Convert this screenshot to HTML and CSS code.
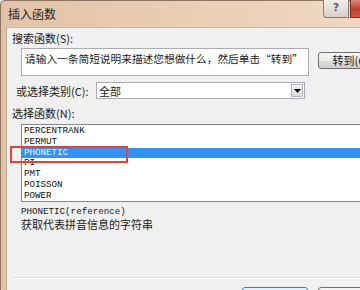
FILE: index.html
```html
<!DOCTYPE html>
<html lang="zh">
<head>
<meta charset="utf-8">
<title>插入函数</title>
<link rel="stylesheet" href="styles.css">
</head>
<body>
<div class="window">
  <div class="titlebar">
    <span class="title">插入函数</span>
    <div class="caption-btns">
      <div class="cap help">?</div>
      <div class="cap close"></div>
    </div>
  </div>
  <div class="frame">
    <div class="content">
      <div class="label">搜索函数(S):</div>
      <div class="search-row">
        <div class="textbox">请输入一条简短说明来描述您想做什么，然后单击“转到”</div>
        <div class="btn go">转到(G)</div>
      </div>
      <div class="cat-row">
        <span class="cat-label">或选择类别(C):</span>
        <div class="select">
          <span class="sel-text">全部</span>
          <span class="sel-arrow"><svg width="7" height="4" viewBox="0 0 7 4"><path d="M0 0H7L3.5 4Z" fill="#000"/></svg></span>
        </div>
      </div>
      <div class="label fn-label">选择函数(N):</div>
      <div class="listbox">
        <div class="item">PERCENTRANK</div>
        <div class="item">PERMUT</div>
        <div class="item selected">PHONETIC</div>
        <div class="item">PI</div>
        <div class="item">PMT</div>
        <div class="item">POISSON</div>
        <div class="item">POWER</div>
        <div class="marker"></div>
      </div>
      <div class="desc-sig">PHONETIC(reference)</div>
      <div class="desc-text">获取代表拼音信息的字符串</div>
      <div class="separator"></div>
      <div class="bottom-row">
        <span class="help-link">有关该函数的帮助</span>
        <div class="btn ok">确定</div>
        <div class="btn cancel">取消</div>
      </div>
    </div>
  </div>
</div>
</body>
</html>
```

FILE: styles.css
```css
html, body {
  margin: 0;
  padding: 0;
}
body {
  width: 360px;
  height: 290px;
  overflow: hidden;
  background: #f0f0f0;
  font-family: "Noto Sans CJK SC", "Noto Sans", sans-serif;
  color: #1a1a1a;
}
.window {
  width: 420px;
  height: 330px;
  display: flex;
  flex-direction: column;
  background: linear-gradient(90deg, #e2c3a7 0%, #ebcfb6 50%, #f2dcc8 100%);
  border-left: 1px solid #8c7460;
  border-top: 1px solid #8c7460;
  border-top-left-radius: 5px;
  box-sizing: border-box;
}
.titlebar {
  height: 26px;
  display: flex;
  align-items: flex-start;
  position: relative;
}
.title {
  font-size: 12px;
  line-height: 12px;
  margin: 7px 0 0 7px;
  color: #1e1e1e;
}
.caption-btns {
  display: flex;
  margin-left: 322px;
  position: absolute;
  left: 0;
  top: -1px;
}
.cap {
  height: 18px;
  box-sizing: border-box;
  border: 1px solid #8a7a6c;
  border-top: none;
}
.help {
  width: 26px;
  border-bottom-left-radius: 4px;
  background: linear-gradient(#f3eeea, #d8d0c8);
  font-family: "DejaVu Sans", sans-serif;
  font-size: 11px;
  line-height: 16px;
  text-align: center;
  color: #55606a;
  font-weight: bold;
}
.close {
  width: 44px;
  margin-left: 1px;
  background: linear-gradient(#e0867a, #c43a2c 55%, #cf5a44);
  border-color: #7a2a22;
}
.frame {
  flex: 1;
  display: flex;
  padding-left: 5px;
}
.content {
  flex: 1;
  background: #f0f0f0;
  border-left: 1px solid #b9aa9c;
  border-top: 1px solid #c9b8a8;
  padding: 3px 0 0 5px;
  display: flex;
  flex-direction: column;
  align-items: flex-start;
}
.label {
  font-size: 11px;
  line-height: 14px;
  height: 14px;
}
.search-row {
  display: flex;
  margin-top: 3px;
  align-items: flex-start;
}
.textbox {
  margin-left: 9px;
  width: 288px;
  height: 28px;
  box-sizing: border-box;
  background: #fff;
  border: 1px solid #a9acb3;
  font-size: 10.7px;
  line-height: 14px;
  padding: 3px 0 0 3px;
  white-space: nowrap;
  overflow: hidden;
}
.btn {
  box-sizing: border-box;
  border: 1px solid #707070;
  border-radius: 3px;
  background: linear-gradient(#f4f4f4 0%, #ebebeb 50%, #dddddd 51%, #cfcfcf 100%);
  font-size: 11px;
  line-height: 15px;
  text-align: center;
  white-space: nowrap;
}
.go {
  margin-left: 9px;
  margin-top: 4px;
  width: 66px;
  height: 17px;
}
.cat-row {
  display: flex;
  align-items: center;
  margin-top: 6px;
}
.cat-label {
  font-size: 11px;
  line-height: 14px;
  width: 84px;
  padding-left: 4px;
  box-sizing: border-box;
}
.select {
  width: 209px;
  height: 17px;
  box-sizing: border-box;
  background: #fff;
  border: 1px solid #a9acb3;
  display: flex;
  align-items: center;
}
.sel-text {
  flex: 1;
  font-size: 11px;
  line-height: 14px;
  padding-left: 2px;
}
.sel-arrow {
  width: 12px;
  height: 13px;
  margin-right: 1px;
  box-sizing: border-box;
  border: 1px solid #b4b4b4;
  background: linear-gradient(#f4f4f4, #dcdcdc);
  display: flex;
  align-items: center;
  justify-content: center;
}
.fn-label {
  margin-top: 7px;
}
.listbox {
  position: relative;
  margin-left: 9px;
  margin-top: 4px;
  width: 400px;
  height: 78px;
  box-sizing: border-box;
  background: #fff;
  border: 1px solid #828790;
  padding-top: 1px;
}
.item {
  font-family: "Liberation Mono", "DejaVu Sans Mono", monospace;
  font-size: 9.2px;
  line-height: 10.8px;
  height: 10.8px;
  padding-left: 2px;
  color: #111;
}
.item.selected {
  background: #3392f4;
  color: #eef6ff;
}
.marker {
  position: absolute;
  left: -12px;
  top: 21px;
  width: 118px;
  height: 17px;
  box-sizing: border-box;
  border: 2px solid #e2413f;
}
.desc-sig {
  margin-left: 9px;
  margin-top: 4px;
  font-family: "Liberation Mono", "DejaVu Sans Mono", monospace;
  font-size: 9.2px;
  line-height: 12px;
}
.desc-text {
  margin-left: 9px;
  font-size: 11px;
  line-height: 13px;
}
.separator {
  align-self: stretch;
  margin-top: 46px;
  height: 0;
  border-top: 1px solid #dcdcdc;
  border-bottom: 1px solid #fafafa;
}
.bottom-row {
  display: flex;
  align-items: flex-start;
  margin-top: 8px;
}
.help-link {
  margin-left: 4px;
  margin-top: 2px;
  font-size: 11px;
  line-height: 14px;
  color: #0a50b4;
  width: 226px;
}
.ok {
  width: 66px;
  height: 20px;
  border-color: #3c7fb1;
  background: linear-gradient(#e5f4fc, #c4e5f6);
}
.cancel {
  margin-left: 10px;
  width: 66px;
  height: 20px;
}
```
